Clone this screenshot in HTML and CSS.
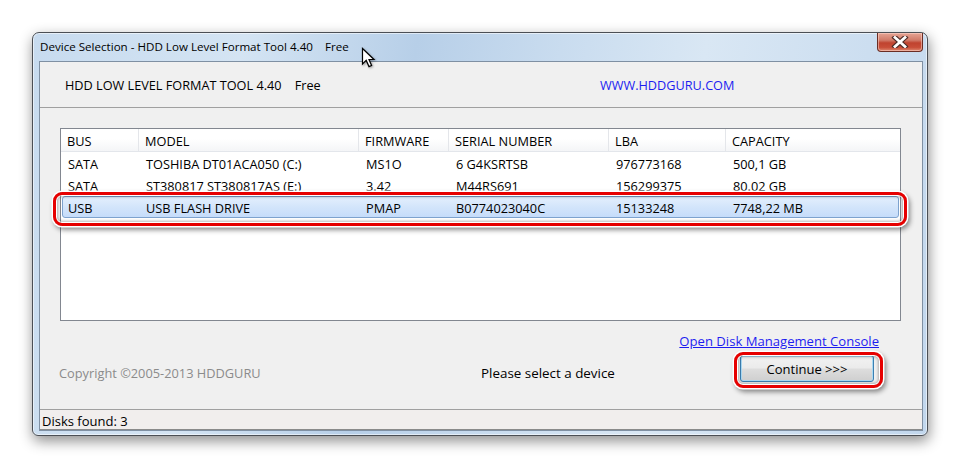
FILE: index.html
```html
<!DOCTYPE html>
<html>
<head>
<meta charset="utf-8">
<link rel="stylesheet" href="styles.css">
</head>
<body>
<div class="stage">
  <div class="window">
    <div class="titlebar">
      <span class="title">Device Selection - HDD Low Level Format Tool 4.40    Free</span>
      <span class="close"><svg width="18" height="12" viewBox="0 0 18 12"><path d="M4 1.5 L14 10.5 M14 1.5 L4 10.5" stroke="#4a2a25" stroke-width="5" stroke-linecap="square"/><path d="M4 1.5 L14 10.5 M14 1.5 L4 10.5" stroke="#fff" stroke-width="2.8" stroke-linecap="square"/></svg></span>
    </div>
    <div class="client">
      <div class="header">
        <span class="app">HDD LOW LEVEL FORMAT TOOL 4.40    Free</span>
        <span class="site">WWW.HDDGURU.COM</span>
      </div>
      <div class="main">
        <div class="list">
          <div class="lhead">
            <span>BUS</span><span>MODEL</span><span>FIRMWARE</span><span>SERIAL NUMBER</span><span>LBA</span><span>CAPACITY</span>
          </div>
          <div class="row">
            <span>SATA</span><span>TOSHIBA DT01ACA050 (C:)</span><span>MS1O</span><span>6 G4KSRTSB</span><span>976773168</span><span>500,1 GB</span>
          </div>
          <div class="row">
            <span>SATA</span><span>ST380817 ST380817AS (E:)</span><span>3.42</span><span>M44RS691</span><span>156299375</span><span>80.02 GB</span>
          </div>
          <div class="row sel">
            <span>USB</span><span>USB FLASH DRIVE</span><span>PMAP</span><span>B0774023040C</span><span>15133248</span><span>7748,22 MB</span>
          </div>
        </div>
        <div class="linkrow"><span class="link">Open Disk Management Console</span></div>
        <div class="bottomrow">
          <span class="copy">Copyright ©2005-2013 HDDGURU</span>
          <span class="prompt">Please select a device</span>
          <span class="btn">Continue &gt;&gt;&gt;</span>
        </div>
      </div>
      <div class="status">Disks found: 3</div>
    </div>
  </div>
  <div class="mark mark-row"></div>
  <div class="mark mark-btn"></div>
  <svg class="cursor" width="16" height="22" viewBox="0 0 16 22"><path d="M1.5 1.5 L1.5 17 L5.2 13.4 L8 19.6 L10.6 18.5 L8 12.5 L13 12.5 Z" fill="#fff" stroke="#000" stroke-width="1.2" stroke-linejoin="miter"/></svg>
</div>
</body>
</html>
```
FILE: styles.css
```css
html, body {
  margin: 0;
  padding: 0;
  background: #ffffff;
}
.stage {
  position: relative;
  width: 961px;
  height: 470px;
  padding: 32px 0 0 32px;
  box-sizing: border-box;
  font-family: "Open Sans", "Noto Sans", sans-serif;
  font-size: 12px;
  color: #000;
}
.window {
  width: 896px;
  height: 404px;
  box-sizing: border-box;
  border: 1px solid #4b4f55;
  border-radius: 7px 7px 6px 6px;
  background: linear-gradient(100deg, #c7dbef 0%, #d4e4f3 22%, #b7cfe8 40%, #c9dcef 55%, #d9e7f4 70%, #c2d7ed 100%);
  box-shadow: 1px 5px 14px rgba(0,0,0,0.45), inset 0 0 0 1px rgba(255,255,255,0.55);
  padding: 0 4px 4px 6px;
  display: flex;
  flex-direction: column;
}
.titlebar {
  height: 28px;
  display: flex;
  justify-content: space-between;
  align-items: flex-start;
}
.title {
  white-space: pre;
  padding: 6px 0 0 1px;
  font-size: 11.6px;
  color: #000;
}
.close {
  width: 44px;
  height: 18px;
  border: 1px solid #6a2d24;
  border-top: none;
  border-radius: 0 0 4px 4px;
  background: linear-gradient(#e6a595 0%, #d07a68 40%, #c0432f 55%, #c84e38 80%, #de8a72 100%);
  box-shadow: inset 0 0 0 1px rgba(255,220,210,0.5);
  display: flex;
  align-items: center;
  justify-content: center;
}
.client {
  flex: 1;
  border: 1px solid #7f90a3;
  background: #f0f0f0;
  display: flex;
  flex-direction: column;
}
.header {
  height: 45px;
  border-bottom: 1px solid #a0a0a0;
  display: flex;
  align-items: center;
  padding-left: 25px;
  font-size: 12.7px;
}
.app {
  white-space: pre;
  width: 535px;
}
.site {
  color: #1d1df0;
}
.main {
  padding: 20px 21px 0 20px;
  flex: 1;
  display: flex;
  flex-direction: column;
}
.list {
  height: 193px;
  box-sizing: border-box;
  border: 1px solid #828790;
  background: #fff;
  font-size: 12.75px;
}
.lhead {
  display: grid;
  grid-template-columns: 78px 220px 90px 160px 117px 1fr;
  height: 23px;
  box-sizing: border-box;
  border-bottom: 1px solid #e3e6eb;
  background: linear-gradient(#ffffff 0%, #ffffff 45%, #f4f5f7 100%);
}
.lhead span {
  padding: 3px 0 0 6px;
  border-right: 1px solid #e4e6ea;
  line-height: 19px;
}
.lhead span:last-child {
  border-right: none;
}
.row {
  display: grid;
  grid-template-columns: 76px 220px 90px 160px 117px 1fr;
  height: 22px;
  box-sizing: border-box;
  margin: 0 1px;
  border: 1px solid transparent;
  border-radius: 3px;
  line-height: 18px;
}
.row span {
  padding: 2px 0 0 7px;
  white-space: nowrap;
}
.row span:first-child {
  padding-left: 5px;
}
.row.sel {
  border-color: #7da2ce;
  background: linear-gradient(#e3effd 0%, #d3e5fb 50%, #c5dcfa 100%);
}
.linkrow {
  display: flex;
  justify-content: flex-end;
  padding: 11px 22px 0 0;
  height: 18px;
}
.link {
  color: #1d1df0;
  text-decoration: underline;
  font-size: 13.1px;
}
.bottomrow {
  display: flex;
  align-items: center;
  margin-top: 6px;
  height: 26px;
  font-size: 13px;
}
.copy {
  color: #8b8b8b;
  width: 422px;
  padding-top: 8px;
  margin-left: -1px;
  font-size: 12.8px;
}
.prompt {
  width: 259px;
  padding-top: 8px;
  font-size: 13.4px;
}
.btn {
  width: 132px;
  height: 23px;
  box-sizing: content-box;
  border: 1px solid #3c7fb1;
  border-radius: 3px;
  background: linear-gradient(#f2f2f2 0%, #ebebeb 48%, #dddddd 52%, #cfcfcf 100%);
  box-shadow: inset 0 0 0 1px #a9d8f2;
  display: flex;
  align-items: center;
  justify-content: center;
  font-size: 13px;
  padding-top: 2px;
  margin-top: -2px;
}
.status {
  height: 19px;
  margin-top: 2px;
  border-top: 1px solid #a0a0a0;
  border-bottom: 1px solid #8a8a8a;
  background: #f1eeed;
  padding-left: 2px;
  line-height: 22px;
  font-size: 13px;
}
.mark {
  position: absolute;
  box-sizing: border-box;
  border: 3px solid #e60000;
  border-radius: 9px;
  box-shadow: 0 0 0 1.5px #ffffff, 2px 3px 5px 1px rgba(0,0,0,0.45), inset 0 0 0 1px #ffffff, inset 0 0 3px 2px rgba(0,0,0,0.28);
}
.mark-row {
  left: 53px;
  top: 192px;
  width: 854px;
  height: 34px;
}
.mark-btn {
  left: 734px;
  top: 352px;
  width: 149px;
  height: 36px;
}
.cursor {
  position: absolute;
  left: 361px;
  top: 47px;
  filter: drop-shadow(1px 1px 1px rgba(0,0,0,0.35));
}
```
